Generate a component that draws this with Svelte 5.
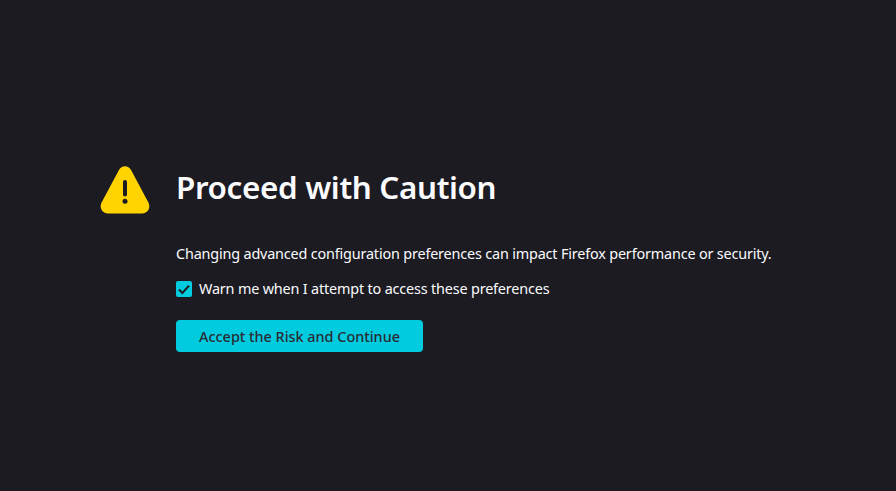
<script>
  let warn = $state(true);
</script>

<main class="page">
  <div class="container">
    <svg class="icon" viewBox="0 0 50 48" aria-hidden="true">
      <path class="tri" d="M18.8 4.2 L1.6 36.6 C-1 41.6 2.2 47.4 7.6 47.4 H42.4 C47.8 47.4 51 41.6 48.4 36.6 L31.2 4.2 C28.5 -1 21.5 -1 18.8 4.2 Z" />
      <rect class="mark" x="23" y="14" width="4" height="16.5" rx="2" />
      <circle class="mark" cx="25" cy="35.3" r="2.5" />
    </svg>
    <div class="content">
      <h1>Proceed with Caution</h1>
      <p>Changing advanced configuration preferences can impact Firefox performance or security.</p>
      <label class="check">
        <input type="checkbox" bind:checked={warn} />
        <span class="box">
          {#if warn}
            <svg viewBox="0 0 16 16" aria-hidden="true"><path d="M3 8.5 L6.4 12 L13 4.6" /></svg>
          {/if}
        </span>
        <span>Warn me when I attempt to access these preferences</span>
      </label>
      <button type="button">Accept the Risk and Continue</button>
    </div>
  </div>
</main>

<style>
  :global(body) {
    background: #1c1b22;
  }
  .page {
    height: 491px;
    background: #1c1b22;
    color: #fbfbfe;
    font-family: "Noto Sans", "Open Sans", sans-serif;
    display: flex;
    padding: 165px 0 0 100px;
    box-sizing: border-box;
  }
  .container {
    display: flex;
    gap: 26px;
    align-items: flex-start;
  }
  .icon {
    width: 50px;
    height: 48px;
    flex: none;
    margin-top: 1px;
  }
  .tri {
    fill: #ffd400;
  }
  .mark {
    fill: #1c1b22;
  }
  h1 {
    margin: 0;
    font-size: 31.4px;
    line-height: 44px;
    font-weight: 600;
    letter-spacing: -0.35px;
  }
  p {
    margin: 34px 0 0;
    font-size: 14.4px;
    line-height: 22px;
    letter-spacing: -0.17px;
  }
  .check {
    display: flex;
    align-items: center;
    gap: 7px;
    margin-top: 13px;
    font-size: 14.4px;
    line-height: 22px;
    letter-spacing: -0.17px;
  }
  .check input {
    position: absolute;
    opacity: 0;
    width: 0;
    height: 0;
  }
  .box {
    width: 16px;
    height: 16px;
    border-radius: 2px;
    background: #00cbdf;
    flex: none;
    display: flex;
  }
  .box svg {
    width: 16px;
    height: 16px;
  }
  .box path {
    fill: none;
    stroke: #1c1b22;
    stroke-width: 2;
  }
  button {
    display: block;
    margin-top: 20px;
    width: 247px;
    height: 32px;
    border: none;
    border-radius: 4px;
    background: #00cbdf;
    color: #2b2a33;
    font-family: inherit;
    font-size: 14.4px;
    font-weight: 500;
    padding: 0;
  }
</style>
